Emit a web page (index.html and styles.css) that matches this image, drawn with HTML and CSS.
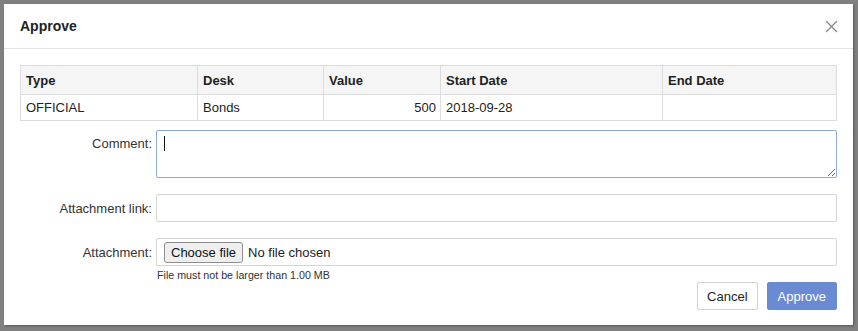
FILE: index.html
```html
<!DOCTYPE html>
<html lang="en">
<head>
  <meta charset="UTF-8" />
  <title>Approve</title>
  <link rel="stylesheet" href="styles.css">
</head>
<body>
  <div class="modal">
    <div class="modal-header">
      <h3>Approve</h3>
      <button class="close" aria-label="Close">
        <svg width="13" height="13" viewBox="0 0 13 13"><path d="M1 1L12 12M12 1L1 12" stroke="#8a8a8a" stroke-width="1.3" fill="none"/></svg>
      </button>
    </div>
    <div class="modal-body">
      <table class="grid">
        <colgroup>
          <col style="width:177px"><col style="width:126px"><col style="width:117px"><col style="width:222px"><col>
        </colgroup>
        <thead>
          <tr><th>Type</th><th>Desk</th><th>Value</th><th>Start Date</th><th>End Date</th></tr>
        </thead>
        <tbody>
          <tr><td>OFFICIAL</td><td>Bonds</td><td class="num">500</td><td>2018-09-28</td><td></td></tr>
        </tbody>
      </table>

      <div class="form-row top">
        <label>Comment:</label>
        <div class="field">
          <textarea class="focused"></textarea>
          <span class="caret"></span>
        </div>
      </div>
      <div class="form-row">
        <label>Attachment link:</label>
        <input type="text">
      </div>
      <div class="form-row">
        <label>Attachment:</label>
        <div class="file-box"><button class="choose">Choose file</button><span>No file chosen</span></div>
      </div>
      <div class="form-row help-row">
        <span></span>
        <small>File must not be larger than 1.00 MB</small>
      </div>

      <div class="actions">
        <button class="btn">Cancel</button>
        <button class="btn primary">Approve</button>
      </div>
    </div>
  </div>
</body>
</html>
```

FILE: styles.css
```css
body { margin: 0; padding: 4px 5px 6px 4px; background: #808080; font-family: "Liberation Sans", Arial, sans-serif; font-size: 13px; color: #222; }
.modal { background: #fff; height: 321px; box-shadow: 1px 1px 2px rgba(0,0,0,0.35); }
.modal-header { height: 44px; border-bottom: 1px solid #e2e2e2; display: flex; align-items: center; justify-content: space-between; padding: 0 16px; }
.modal-header h3 { margin: 0; font-size: 14px; font-weight: bold; color: #222; }
.close { background: none; border: 0; padding: 0; width: 13px; height: 13px; margin-right: -1px; }
.close svg { display: block; }
.modal-body { padding: 16px 16px 0 16px; }
.grid { width: 817px; border-collapse: collapse; table-layout: fixed; }
.grid th, .grid td { border: 1px solid #dcdcdc; padding: 0 5px; text-align: left; }
.grid th { height: 28px; background: #f5f5f5; font-weight: bold; }
.grid td { height: 25px; }
.grid td.num { text-align: right; padding-right: 4px; }
.form-row { display: grid; grid-template-columns: 132px 681px; column-gap: 4px; align-items: center; margin-top: 16px; }
.form-row.top { align-items: start; margin-top: 9px; }
.form-row.top label { padding-top: 6px; }
.form-row label { text-align: right; color: #333; }
.field { position: relative; height: 48px; }
textarea { box-sizing: border-box; width: 100%; height: 48px; margin: 0; display: block; border: 1px solid #ccc; border-radius: 2px; font: inherit; }
textarea.focused { border-color: #8ea9e0; outline: none; }
.caret { position: absolute; left: 8px; top: 6px; width: 1px; height: 15px; background: #111; }
input[type=text], .file-box { box-sizing: border-box; width: 100%; height: 28px; margin: 0; border: 1px solid #d4d4d4; border-radius: 2px; font: inherit; }
.file-box { display: flex; align-items: center; gap: 5px; padding-left: 7px; font-size: 13px; color: #222; }
.choose { height: 21px; padding: 0 6px; border: 1px solid #8f8f8f; border-radius: 3px; background: #efefef; font: inherit; color: #111; }
.help-row { margin-top: 3px; }
.help-row small { font-size: 10.7px; color: #333; padding-left: 1px; }
.actions { display: flex; justify-content: flex-end; gap: 9px; margin-top: 1px; }
.btn { height: 28px; padding: 0 9px; border: 1px solid #d2d2d2; border-radius: 2px; background: #fff; font: inherit; color: #222; }
.btn.primary { background: #6a8ad4; border-color: #6a8ad4; color: #fff; padding: 0 10px; }
```
